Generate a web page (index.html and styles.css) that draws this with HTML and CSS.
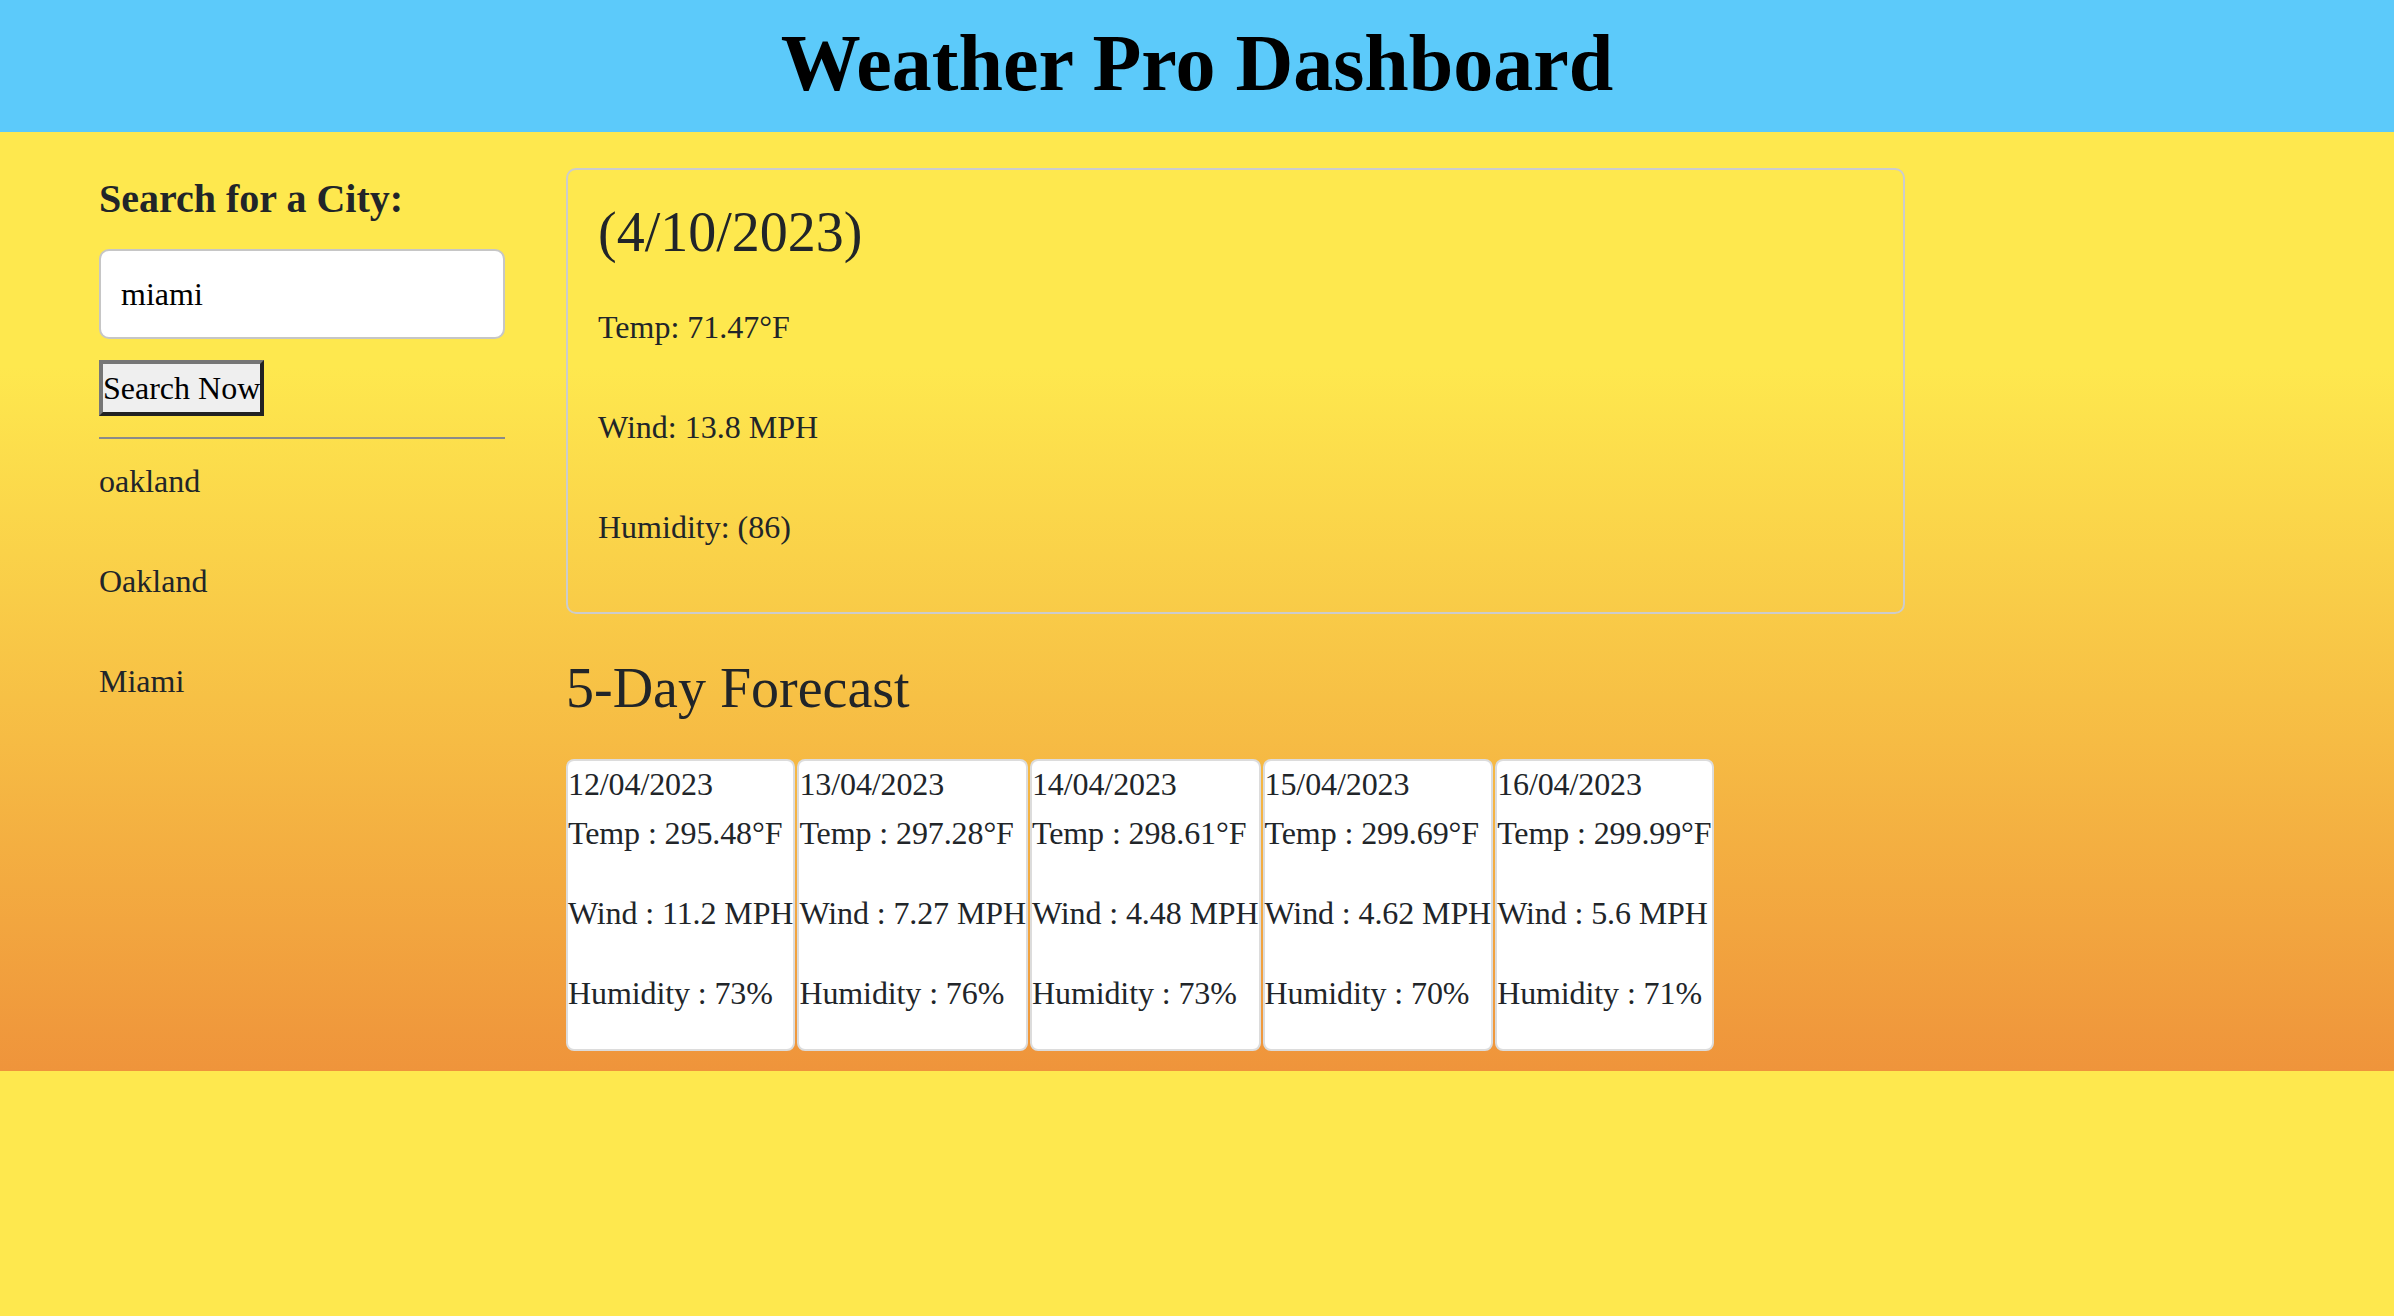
FILE: index.html
```html
<!DOCTYPE html>
<html lang="en">
<head>
<meta charset="utf-8">
<title>Weather Pro Dashboard</title>
<link rel="stylesheet" href="styles.css">
</head>
<body>
  <header class="top-bar">
    <h1 class="title">Weather Pro Dashboard</h1>
  </header>
  <main class="main">
    <aside class="sidebar">
      <h2 class="search-title">Search for a City:</h2>
      <input class="search-input" type="text" value="miami">
      <button class="search-btn" type="button">Search Now</button>
      <hr class="divider">
      <p class="history-item">oakland</p>
      <p class="history-item">Oakland</p>
      <p class="history-item">Miami</p>
    </aside>
    <section class="content">
      <div class="current-card">
        <h3 class="current-date">(4/10/2023)</h3>
        <p class="current-line">Temp: 71.47°F</p>
        <p class="current-line">Wind: 13.8 MPH</p>
        <p class="current-line">Humidity: (86)</p>
      </div>
      <h3 class="forecast-title">5-Day Forecast</h3>
      <div class="forecast-row">
        <div class="day-card">
          <div class="day-date">12/04/2023</div>
          <p class="day-line">Temp : 295.48°F</p>
          <p class="day-line">Wind : 11.2 MPH</p>
          <p class="day-line">Humidity : 73%</p>
        </div>
        <div class="day-card">
          <div class="day-date">13/04/2023</div>
          <p class="day-line">Temp : 297.28°F</p>
          <p class="day-line">Wind : 7.27 MPH</p>
          <p class="day-line">Humidity : 76%</p>
        </div>
        <div class="day-card">
          <div class="day-date">14/04/2023</div>
          <p class="day-line">Temp : 298.61°F</p>
          <p class="day-line">Wind : 4.48 MPH</p>
          <p class="day-line">Humidity : 73%</p>
        </div>
        <div class="day-card">
          <div class="day-date">15/04/2023</div>
          <p class="day-line">Temp : 299.69°F</p>
          <p class="day-line">Wind : 4.62 MPH</p>
          <p class="day-line">Humidity : 70%</p>
        </div>
        <div class="day-card">
          <div class="day-date">16/04/2023</div>
          <p class="day-line">Temp : 299.99°F</p>
          <p class="day-line">Wind : 5.6 MPH</p>
          <p class="day-line">Humidity : 71%</p>
        </div>
      </div>
    </section>
  </main>
</body>
</html>
```

FILE: styles.css
```css
* {
  box-sizing: border-box;
}

html, body {
  margin: 0;
  padding: 0;
}

body {
  background: #fee84e;
  font-family: "Liberation Serif", "Times New Roman", serif;
  font-size: 32px;
  line-height: 48px;
  color: #212529;
  min-height: 1316px;
}

.top-bar {
  background: #5ccafa;
  height: 132px;
  padding-top: 15px;
  text-align: center;
}

.title {
  margin: 0;
  font-size: 80px;
  line-height: 96px;
  font-weight: bold;
  color: #000;
}

.main {
  display: flex;
  align-items: flex-start;
  gap: 61px;
  padding: 36px 0 20px 99px;
  background: linear-gradient(to bottom, #fee84e 25%, #ef943b 100%);
}

.sidebar {
  width: 406px;
  flex: none;
}

.search-title {
  margin: 7px 0 26px;
  font-size: 40px;
  line-height: 48px;
  font-weight: bold;
}

.search-input {
  display: block;
  width: 406px;
  height: 90px;
  margin: 0;
  padding: 0 20px;
  border: 2px solid #c6c6c6;
  border-radius: 10px;
  background: #fff;
  font-family: "Liberation Serif", "Times New Roman", serif;
  font-size: 32px;
  color: #000;
  outline: none;
}

.search-btn {
  display: block;
  margin: 21px 0 0;
  height: 56px;
  padding: 0;
  border: 4px solid;
  border-color: #767676 #222 #222 #767676;
  background: #efefef;
  font-family: "Liberation Serif", "Times New Roman", serif;
  font-size: 32px;
  line-height: 48px;
  color: #000;
  white-space: nowrap;
}

.divider {
  margin: 21px 0 18px;
  height: 0;
  border: 0;
  border-top: 2px solid #8a8a8a;
}

.history-item {
  margin: 0 0 52px;
}

.content {
  width: 1339px;
  flex: none;
}

.current-card {
  border: 2px solid #cccccc;
  border-radius: 10px;
  padding: 29px 30px 9px;
}

.current-date {
  margin: 0 0 37px;
  font-size: 56px;
  line-height: 67px;
  font-weight: normal;
}

.current-line {
  margin: 0 0 52px;
}

.forecast-title {
  margin: 41px 0 37px;
  font-size: 56px;
  line-height: 67px;
  font-weight: normal;
}

.forecast-row {
  display: flex;
  align-items: flex-start;
  gap: 2px;
}

.day-card {
  background: #fff;
  border: 2px solid #dcdcdc;
  border-radius: 8px;
  white-space: nowrap;
  letter-spacing: -0.1px;
}

.day-date {
  padding-top: 4px;
  line-height: 38px;
  margin-bottom: 6px;
}

.day-line {
  margin: 0 0 32px;
}
```
